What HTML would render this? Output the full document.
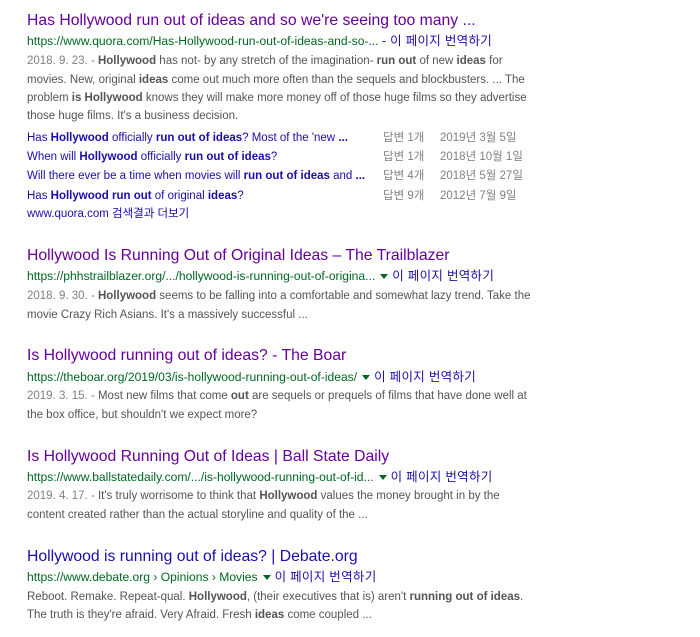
<!DOCTYPE html>
<html><head><meta charset="utf-8"><style>
body{margin:0;width:700px;height:637px;background:#fff;position:relative;overflow:hidden;font-family:"Liberation Sans","Noto Sans CJK KR",sans-serif}
div{position:absolute;left:27px;white-space:nowrap}
.t{font-size:15.75px;line-height:20px;color:#660099}
.b{color:#1a0dab}
.u{font-size:12.1px;line-height:18px;color:#006621}
.k{color:#1a0dab;font-size:12.5px;letter-spacing:0.3px}
.s{font-size:11.5px;line-height:18px;color:#545454}
.d{color:#808080}
.l{font-size:11.5px;line-height:18px;color:#1a0dab}
.m{font-size:11.5px;line-height:18px;color:#808080}
.ar{display:inline-block;width:0;height:0;border-left:4px solid transparent;border-right:4px solid transparent;border-top:5px solid #006621;vertical-align:middle;margin:0 4px 0 5px}
</style></head><body>
<div class="t" style="top:11px">Has Hollywood run out of ideas and so we're seeing too many ...</div>
<div class="u" style="top:32px">https://www.quora.com/Has-Hollywood-run-out-of-ideas-and-so-... <span class="k">- 이 페이지 번역하기</span></div>
<div class="s" style="top:52px"><span class="d">2018. 9. 23. - </span><b>Hollywood</b> has not- by any stretch of the imagination- <b>run out</b> of new <b>ideas</b> for</div>
<div class="s" style="top:71px">movies. New, original <b>ideas</b> come out much more often than the sequels and blockbusters. ... The</div>
<div class="s" style="top:89px">problem <b>is Hollywood</b> knows they will make more money off of those huge films so they advertise</div>
<div class="s" style="top:107px">those huge films. It's a business decision.</div>
<div class="l" style="top:129px">Has <b>Hollywood</b> officially <b>run out of ideas</b>? Most of the 'new <b>...</b></div>
<div class="l" style="top:148px">When will <b>Hollywood</b> officially <b>run out of ideas</b>?</div>
<div class="l" style="top:167px">Will there ever be a time when movies will <b>run out of ideas</b> and <b>...</b></div>
<div class="l" style="top:187px">Has <b>Hollywood run out</b> of original <b>ideas</b>?</div>
<div class="m" style="left:383px;top:129px">답변 1개</div><div class="m" style="left:440px;top:129px">2019년 3월 5일</div>
<div class="m" style="left:383px;top:148px">답변 1개</div><div class="m" style="left:440px;top:148px">2018년 10월 1일</div>
<div class="m" style="left:383px;top:167px">답변 4개</div><div class="m" style="left:440px;top:167px">2018년 5월 27일</div>
<div class="m" style="left:383px;top:187px">답변 9개</div><div class="m" style="left:440px;top:187px">2012년 7월 9일</div>
<div class="l" style="top:205px">www.quora.com 검색결과 더보기</div>

<div class="t" style="top:246px">Hollywood Is Running Out of Original Ideas – The Trailblazer</div>
<div class="u" style="top:267px">https://phhstrailblazer.org/.../hollywood-is-running-out-of-origina...<span class="ar"></span><span class="k">이 페이지 번역하기</span></div>
<div class="s" style="top:287px"><span class="d">2018. 9. 30. - </span><b>Hollywood</b> seems to be falling into a comfortable and somewhat lazy trend. Take the</div>
<div class="s" style="top:306px">movie Crazy Rich Asians. It's a massively successful ...</div>

<div class="t" style="top:346px">Is Hollywood running out of ideas? - The Boar</div>
<div class="u" style="top:368px">https://theboar.org/2019/03/is-hollywood-running-out-of-ideas/<span class="ar"></span><span class="k">이 페이지 번역하기</span></div>
<div class="s" style="top:387px"><span class="d">2019. 3. 15. - </span>Most new films that come <b>out</b> are sequels or prequels of films that have done well at</div>
<div class="s" style="top:406px">the box office, but shouldn't we expect more?</div>

<div class="t" style="top:447px">Is Hollywood Running Out of Ideas | Ball State Daily</div>
<div class="u" style="top:468px">https://www.ballstatedaily.com/.../is-hollywood-running-out-of-id...<span class="ar"></span><span class="k">이 페이지 번역하기</span></div>
<div class="s" style="top:487px"><span class="d">2019. 4. 17. - </span>It's truly worrisome to think that <b>Hollywood</b> values the money brought in by the</div>
<div class="s" style="top:506px">content created rather than the actual storyline and quality of the ...</div>

<div class="t b" style="top:547px">Hollywood is running out of ideas? | Debate.org</div>
<div class="u" style="top:568px">https://www.debate.org › Opinions › Movies<span class="ar"></span><span class="k">이 페이지 번역하기</span></div>
<div class="s" style="top:588px">Reboot. Remake. Repeat-qual. <b>Hollywood</b>, (their executives that is) aren't <b>running out of ideas</b>.</div>
<div class="s" style="top:606px">The truth is they're afraid. Very Afraid. Fresh <b>ideas</b> come coupled ...</div>
</body></html>
